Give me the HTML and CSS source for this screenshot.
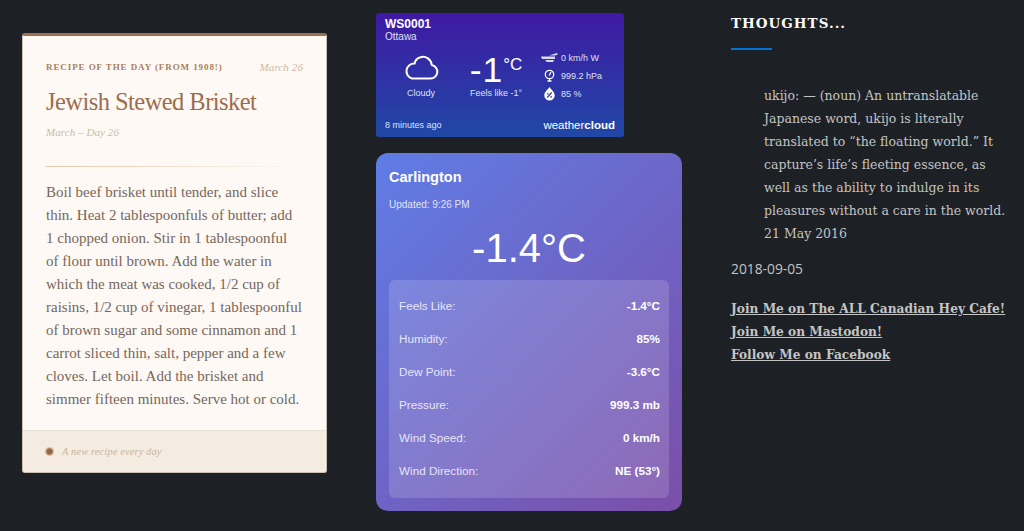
FILE: index.html
```html
<!DOCTYPE html>
<html lang="en">
<head>
    <meta charset="UTF-8">
    <meta name="viewport" content="width=device-width, initial-scale=1.0">
    <title>Thoughts</title>
    <link rel="stylesheet" href="styles.css">
</head>
<body>
    <div class="page">
        <div class="col-recipe">
            <div class="recipe-card">
                <div class="recipe-body">
                    <div class="recipe-top">
                        <span class="recipe-label">RECIPE OF THE DAY (FROM 1908!)</span>
                        <span class="recipe-date">March 26</span>
                    </div>
                    <h2 class="recipe-title">Jewish Stewed Brisket</h2>
                    <div class="recipe-sub">March – Day 26</div>
                    <div class="recipe-rule"></div>
                    <p class="recipe-text">Boil beef brisket until tender, and slice thin. Heat 2 tablespoonfuls of butter; add 1 chopped onion. Stir in 1 tablespoonful of flour until brown. Add the water in which the meat was cooked, 1/2 cup of raisins, 1/2 cup of vinegar, 1 tablespoonful of brown sugar and some cinnamon and 1 carrot sliced thin, salt, pepper and a few cloves. Let boil. Add the brisket and simmer fifteen minutes. Serve hot or cold.</p>
                </div>
                <div class="recipe-foot">
                    <span class="foot-dot"></span>
                    <span class="foot-text">A new recipe every day</span>
                </div>
            </div>
        </div>

        <div class="col-weather">
            <div class="ws-card">
                <div class="ws-id">WS0001</div>
                <div class="ws-city">Ottawa</div>
                <div class="ws-main">
                    <div class="ws-sky">
                        <svg class="ws-cloud" viewBox="0 0 36 26" width="36" height="26">
                            <path d="M9 24.500h18.500a6.800 6.800 0 0 0 1.200-13.500A8.800 8.800 0 0 0 17.500 3.200 8 8 0 0 0 11.600 9.600 7.600 7.600 0 0 0 9 24.500z" fill="none" stroke="#fff" stroke-width="2" stroke-linejoin="round"/>
                        </svg>
                        <div class="ws-small">Cloudy</div>
                    </div>
                    <div class="ws-temp">
                        <div class="ws-temp-num">-1<span class="ws-unit">°C</span></div>
                        <div class="ws-small">Feels like -1°</div>
                    </div>
                    <div class="ws-stats">
                        <div class="ws-stat">
                            <svg class="ws-icon" viewBox="0 0 18 14" width="18" height="14">
                                <path d="M0 5.500h14v2.500H1zM4 9h9l-1 2H6zM8 4.500l8-2.500 .8 1.500-3 1z" fill="#d9dcf0"/>
                            </svg>
                            <span>0 km/h W</span>
                        </div>
                        <div class="ws-stat">
                            <svg class="ws-icon" viewBox="0 0 18 14" width="18" height="14">
                                <circle cx="8.500" cy="5.500" r="4.200" fill="none" stroke="#fff" stroke-width="1.300"/>
                                <path d="M8.200 6.500l1.800-3.500M6.500 12h4" stroke="#fff" stroke-width="1.300" fill="none"/>
                                <path d="M8.500 9.500v2.500" stroke="#fff" stroke-width="1"/>
                            </svg>
                            <span>999.2 hPa</span>
                        </div>
                        <div class="ws-stat">
                            <svg class="ws-icon" viewBox="0 0 18 14" width="18" height="14">
                                <path d="M8.500 0c1 2.200 5.200 4.600 5.200 8.400a5.200 5.200 0 0 1-10.400 0C3.300 4.600 7.500 2.200 8.500 0z" fill="#fff"/>
                                <path d="M6.300 10.500l4.400-5M6 6.800h1.600M9.400 9.800h1.600" stroke="#2a3aa5" stroke-width="1.200" fill="none"/>
                            </svg>
                            <span>85 %</span>
                        </div>
                    </div>
                </div>
                <div class="ws-foot">
                    <span class="ws-ago">8 minutes ago</span>
                    <span class="ws-brand">weather<b>cloud</b></span>
                </div>
            </div>

            <div class="wx-card">
                <div class="wx-city">Carlington</div>
                <div class="wx-updated">Updated: 9:26 PM</div>
                <div class="wx-temp">-1.4°C</div>
                <div class="wx-panel">
                    <div class="wx-row"><span>Feels Like:</span><b>-1.4°C</b></div>
                    <div class="wx-row"><span>Humidity:</span><b>85%</b></div>
                    <div class="wx-row"><span>Dew Point:</span><b>-3.6°C</b></div>
                    <div class="wx-row"><span>Pressure:</span><b>999.3 mb</b></div>
                    <div class="wx-row"><span>Wind Speed:</span><b>0 km/h</b></div>
                    <div class="wx-row"><span>Wind Direction:</span><b>NE (53°)</b></div>
                </div>
            </div>
        </div>

        <div class="col-thoughts">
            <h3 class="thoughts-title">THOUGHTS...</h3>
            <div class="thoughts-rule"></div>
            <blockquote class="thoughts-quote">ukijo: — (noun) An untranslatable Japanese word, ukijo is literally translated to “the floating world.” It capture’s life’s fleeting essence, as well as the ability to indulge in its pleasures without a care in the world. 21 May 2016</blockquote>
            <div class="thoughts-date">2018-09-05</div>
            <div class="thoughts-links">
                <a href="#">Join Me on The ALL Canadian Hey Cafe!</a>
                <a href="#">Join Me on Mastodon!</a>
                <a href="#">Follow Me on Facebook</a>
            </div>
        </div>
    </div>
</body>
</html>
```

FILE: styles.css
```css
html, body {
    margin: 0;
    height: 531px;
    overflow: hidden;
}
body {
    background: #1d2025;
    font-family: "Liberation Sans", Arial, sans-serif;
}
.page {
    display: flex;
    align-items: flex-start;
}

/* recipe */
.col-recipe {
    width: 376px;
    padding: 33px 0 0 22px;
    box-sizing: border-box;
}
.recipe-card {
    width: 305px;
    box-sizing: border-box;
    background: #fef9f5;
    border: 1px solid #c9bfb3;
    border-top: 3px solid #a0714f;
    border-radius: 3px;
    overflow: hidden;
    font-family: "Liberation Serif", serif;
}
.recipe-body {
    padding: 25px 23px 0;
    height: 394px;
    box-sizing: border-box;
}
.recipe-top {
    display: flex;
    justify-content: space-between;
    align-items: center;
}
.recipe-label {
    font-size: 9px;
    font-weight: bold;
    letter-spacing: 0.92px;
    color: #a87f5d;
}
.recipe-date {
    font-size: 11px;
    font-style: italic;
    letter-spacing: 0.1px;
    color: #cdb9a3;
}
.recipe-title {
    margin: 13px 0 0;
    font-size: 24.500px;
    line-height: 32px;
    font-weight: normal;
    letter-spacing: -0.55px;
    color: #9c6d4b;
}
.recipe-sub {
    margin-top: 8px;
    font-size: 11px;
    font-style: italic;
    letter-spacing: 0.07px;
    color: #cdb9a3;
}
.recipe-rule {
    height: 1px;
    margin-top: 28px;
    background: linear-gradient(to right, #e3c9a8, #fef9f5);
}
.recipe-text {
    margin: 14px 0 0;
    font-size: 15px;
    line-height: 23px;
    color: #75675c;
}
.recipe-foot {
    height: 41px;
    display: flex;
    align-items: center;
    gap: 9px;
    padding-left: 23px;
    background: #f4ece0;
    border-top: 1px solid #eae1d5;
}
.foot-dot {
    width: 7px;
    height: 7px;
    border-radius: 50%;
    background: radial-gradient(circle, #8a5a3a, #b08a68);
    box-shadow: 0 0 0 1px #d9c4ae;
}
.foot-text {
    font-size: 10.500px;
    font-style: italic;
    letter-spacing: 0.1px;
    color: #c9b49d;
}

/* weather */
.col-weather {
    width: 355px;
    padding-top: 13px;
    box-sizing: border-box;
}
.ws-card {
    width: 248px;
    height: 124px;
    box-sizing: border-box;
    padding: 5px 9px 0;
    border-radius: 3px;
    background: linear-gradient(#3f19a3, #2048a6);
    color: #fff;
    display: flex;
    flex-direction: column;
}
.ws-id {
    font-size: 12px;
    font-weight: bold;
    line-height: 13px;
}
.ws-city {
    font-size: 10px;
    line-height: 12px;
    color: #dfe0f5;
}
.ws-main {
    display: flex;
    margin-top: 11px;
}
.ws-sky {
    width: 72px;
    text-align: center;
}
.ws-cloud {
    display: block;
    margin: 0 auto 8px;
}
.ws-small {
    font-size: 9px;
    line-height: 11px;
    color: #dfe0f5;
}
.ws-temp {
    width: 78px;
    text-align: center;
}
.ws-temp-num {
    font-size: 35.500px;
    line-height: 33px;
    height: 34px;
    letter-spacing: 1px;
}
.ws-unit {
    font-size: 17px;
    letter-spacing: 0;
    vertical-align: 12px;
    line-height: 0;
}
.ws-stats {
    margin-left: 6px;
    margin-top: -5px;
}
.ws-stat {
    display: flex;
    align-items: center;
    gap: 2px;
    font-size: 9px;
    height: 18px;
    color: #dfe0f5;
}
.ws-foot {
    margin-top: auto;
    height: 24px;
    display: flex;
    align-items: center;
    justify-content: space-between;
}
.ws-ago {
    font-size: 9px;
    color: #dfe0f5;
}
.ws-brand {
    font-size: 11.500px;
}
.wx-card {
    width: 306px;
    height: 358px;
    box-sizing: border-box;
    margin-top: 16px;
    padding: 14px 13px 0;
    border-radius: 12px;
    background: linear-gradient(135deg, #5f7de6, #7b4ea8);
    color: #fff;
}
.wx-city {
    font-size: 14.500px;
    font-weight: bold;
    line-height: 20px;
}
.wx-updated {
    margin-top: 12px;
    font-size: 10px;
    line-height: 12px;
    opacity: 0.8;
}
.wx-temp {
    margin-top: 14px;
    font-size: 40px;
    line-height: 46px;
    text-align: center;
}
.wx-panel {
    margin-top: 9px;
    padding: 9px 9px 11px 10px;
    border-radius: 6px;
    background: rgba(255,255,255,0.15);
}
.wx-row {
    display: flex;
    justify-content: space-between;
    align-items: center;
    height: 33px;
    font-size: 11.700px;
}
.wx-row span {
    opacity: 0.8;
}

/* thoughts */
.col-thoughts {
    flex: 1;
    padding: 13px 16px 0 0;
    font-family: "DejaVu Serif", serif;
    color: #c4c4c4;
}
.thoughts-title {
    margin: 0;
    font-size: 13.500px;
    line-height: 20px;
    letter-spacing: 1px;
    color: #fff;
}
.thoughts-rule {
    width: 41px;
    height: 2px;
    margin-top: 15px;
    background: #0073d9;
}
.thoughts-quote {
    margin: 34px 0 0 33px;
    font-size: 12.500px;
    line-height: 23px;
}
.thoughts-date {
    margin-top: 12px;
    font-family: "Open Sans", sans-serif;
    font-size: 13.800px;
    line-height: 23px;
}
.thoughts-links {
    margin-top: 18px;
    display: flex;
    flex-direction: column;
    align-items: flex-start;
}
.thoughts-links a {
    font-size: 12.200px;
    line-height: 23px;
    font-weight: bold;
    white-space: nowrap;
    color: #c4c4c4;
}
```
